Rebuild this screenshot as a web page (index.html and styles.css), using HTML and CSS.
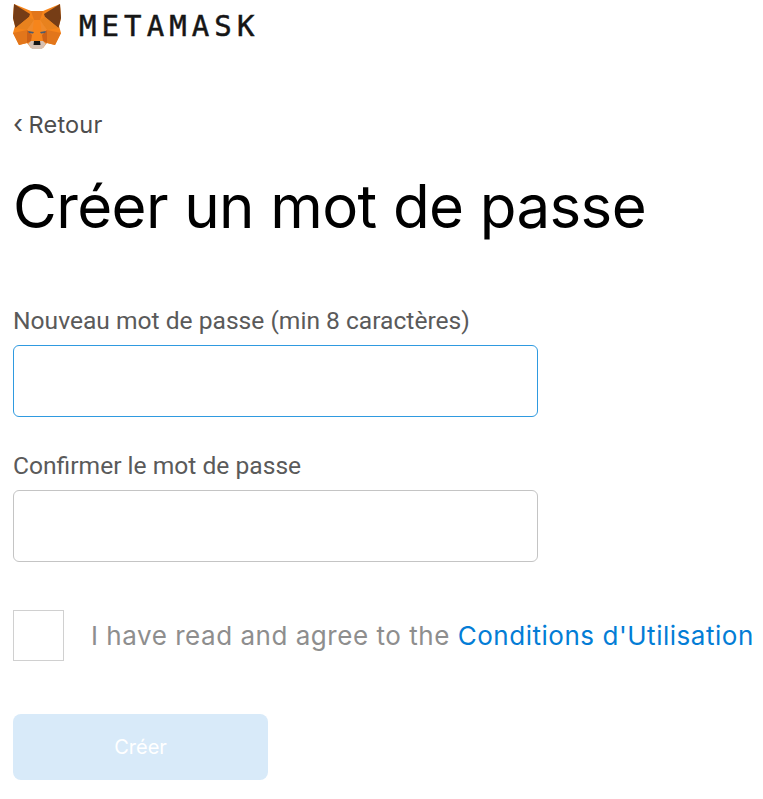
FILE: index.html
```html
<!DOCTYPE html>
<html lang="fr">
<head>
<meta charset="utf-8">
<title>MetaMask</title>
<link rel="stylesheet" href="styles.css">
</head>
<body>
<header class="brand">
  <svg class="fox" viewBox="0 0 48 47" width="48" height="47">
    <polygon points="1,1 18,8 30,8 47,1 48,15 46,23 48,30 42,42 34,40 30,45 18,45 14,40 6,42 0,30 2,23 0,15" fill="#f6851b"/>
    <polygon points="18,8 30,8 27,17 21,17" fill="#e2761b"/>
    <polygon points="1,1 17,11 16,14 2.500,25 0,15" fill="#763d16"/>
    <polygon points="47,1 31,11 32,14 45.500,25 48,15" fill="#763d16"/>
    <polygon points="2.500,25 16,14 21,17 14,27" fill="#e8821e"/>
    <polygon points="45.500,25 32,14 27,17 34,27" fill="#e8821e"/>
    <polygon points="21,17 14,27 19,32" fill="#ef8a2b"/>
    <polygon points="27,17 34,27 29,32" fill="#ef8a2b"/>
    <polygon points="0,30 14,27 14,40 6,42" fill="#e2761b"/>
    <polygon points="48,30 34,27 34,40 42,42" fill="#e2761b"/>
    <polygon points="14,27 19,32 18,38 14,40" fill="#cd6116"/>
    <polygon points="34,27 29,32 30,38 34,40" fill="#cd6116"/>
    <polygon points="15,28 21,29 20,30.500 16,30" fill="#4a5a70"/>
    <polygon points="33,28 27,29 28,30.500 32,30" fill="#4a5a70"/>
    <polygon points="18,38 30,38 33,41 29,46 19,46 15,41" fill="#d7c1b3"/>
    <polygon points="21,38 27,38 27.500,42 20.500,42" fill="#161616"/>
  </svg>
  <span class="wordmark">METAMASK</span>
</header>
<a class="back"><span class="chev">‹</span> Retour</a>
<h1 class="title">Créer un mot de passe</h1>
<form class="form">
  <div class="field">
    <label class="label" for="pw">Nouveau mot de passe (min 8 caractères)</label>
    <input class="input input-focus" id="pw" type="password">
  </div>
  <div class="field">
    <label class="label" for="pw2">Confirmer le mot de passe</label>
    <input class="input" id="pw2" type="password">
  </div>
  <div class="terms">
    <span class="check"></span>
    <span class="terms-text">I have read and agree to the <a class="link">Conditions d'Utilisation</a></span>
  </div>
  <button class="submit" type="button">Créer</button>
</form>
</body>
</html>
```
FILE: styles.css
```css
html, body { margin: 0; padding: 0; background: #fff; }
body { padding: 3px 0 0 13px; font-family: "Inter", sans-serif; height: 796px; box-sizing: border-box; overflow: hidden; }
.brand { display: flex; align-items: center; height: 47px; }
.fox { display: block; flex: none; }
.wordmark { margin-left: 18px; font-family: "DejaVu Sans Mono", monospace; font-size: 29px; font-weight: 400; letter-spacing: 5.1px; color: #161616; -webkit-text-stroke: 0.5px #161616; position: relative; top: -1px; }
.back { display: block; height: 30px; margin-top: 60px; font-size: 23.500px; line-height: 30px; letter-spacing: 0.2px; color: #4d4d4d; }
.chev { font-size: 26px; line-height: 0; margin-right: -1.500px; }
.title { margin: 30px 0 0; font-size: 60px; line-height: 72px; font-weight: 400; letter-spacing: -0.6px; color: #000; }
.form { margin-top: 66px; }
.field { display: flex; flex-direction: column; margin-bottom: 36px; }
.label { font-family: "Roboto", sans-serif; font-size: 24.6px; line-height: 26px; color: #5a5a5a; margin-bottom: 11px; }
.input { width: 525px; height: 72px; box-sizing: border-box; border: 1px solid #c4c4c4; border-radius: 6px; background: #fff; outline: none; padding: 0; }
.input-focus { border-color: #2f9ae0; }
.terms { display: flex; align-items: center; margin-top: 48px; }
.check { width: 51px; height: 51px; box-sizing: border-box; border: 1px solid #d0d0d0; flex: none; }
.terms-text { margin-left: 27px; font-size: 26px; letter-spacing: 0.53px; white-space: nowrap; color: #8e8e8e; }
.link { color: #037dd6; }
.submit { display: block; margin-top: 53px; width: 255px; height: 66px; border: 0; border-radius: 8px; background: #d8eaf9; color: #fff; font-family: "Inter", sans-serif; font-size: 20px; padding: 0; }
```
